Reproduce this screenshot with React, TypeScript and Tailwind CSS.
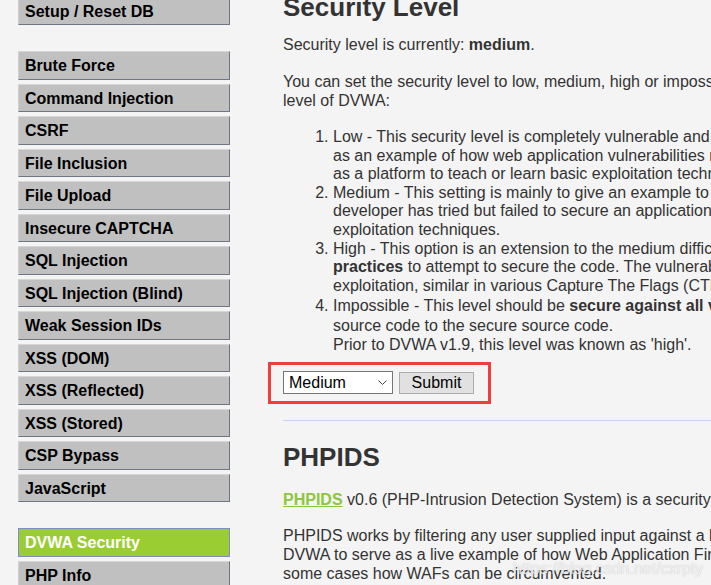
const menuGroups: string[][] = [
  ["Setup / Reset DB"],
  [
    "Brute Force",
    "Command Injection",
    "CSRF",
    "File Inclusion",
    "File Upload",
    "Insecure CAPTCHA",
    "SQL Injection",
    "SQL Injection (Blind)",
    "Weak Session IDs",
    "XSS (DOM)",
    "XSS (Reflected)",
    "XSS (Stored)",
    "CSP Bypass",
    "JavaScript",
  ],
  ["DVWA Security", "PHP Info", "About"],
]

const ACTIVE = "DVWA Security"

function MenuItem({ label }: { label: string }) {
  const active = label === ACTIVE
  return (
    <li
      className={
        active
          ? "flex h-[28.5px] shrink-0 items-center border border-[#7f8cc4] bg-[#9acd32] pl-[6px] pt-[2px] text-[16px] font-bold text-white"
          : "flex h-[28.5px] shrink-0 items-center border border-t-[#d6d6d6] border-l-[#d0d0d0] border-r-[#6e7685] border-b-[#6e7685] bg-[#c0c0c0] pl-[6px] pt-[2px] text-[16px] font-bold text-black"
      }
    >
      {label}
    </li>
  )
}

function Sidebar() {
  return (
    <nav className="-mt-[3.5px] ml-[18px] flex w-[212px] shrink-0 flex-col gap-[26px]">
      {menuGroups.map((group, i) => (
        <ul key={i} className="flex flex-col gap-[4px]">
          {group.map((label) => (
            <MenuItem key={label} label={label} />
          ))}
        </ul>
      ))}
    </nav>
  )
}

function SecurityForm() {
  return (
    <div className="-ml-[15px] mt-[7px] flex h-[42px] w-[223px] items-center border-[3px] border-[#f43b3b] pl-[12px]">
      <div className="relative h-[23px] w-[110px]">
        <select
          defaultValue="medium"
          className="h-full w-full appearance-none border border-[#767676] bg-white pl-[5px] text-[16px] leading-[21px] text-black outline-none"
        >
          <option value="low">Low</option>
          <option value="medium">Medium</option>
          <option value="high">High</option>
          <option value="impossible">Impossible</option>
        </select>
        <svg
          className="pointer-events-none absolute right-[6px] top-[9px] h-[5px] w-[9px] text-[#444]"
          viewBox="0 0 9 5"
          fill="none"
          stroke="currentColor"
          strokeWidth={1}
        >
          <polyline points="0.5 0.5 4.5 4.5 8.5 0.5" />
        </svg>
      </div>
      <button className="ml-[6px] h-[22px] w-[75px] border border-[#adadad] bg-[#e1e1e1] text-[16px] leading-[20px] text-black">
        Submit
      </button>
    </div>
  )
}

export default function App() {
  return (
    <div
      className="relative h-[585px] w-[711px] overflow-hidden bg-[#f4f4f4]"
      style={{ fontFamily: '"Liberation Sans", Arial, sans-serif' }}
    >
      <div className="flex">
        <Sidebar />

        <main className="ml-[53px] w-[820px] shrink-0 whitespace-nowrap text-[16px] text-[#333]">
          <h1 className="-mt-[8.5px] h-[30px] text-[26px] font-bold leading-[30px]">
            Security Level
          </h1>

          <p className="mt-[14px] leading-[18.6px]">
            Security level is currently: <b>medium</b>.
          </p>

          <p className="mt-[19.4px] leading-[18.6px]">
            You can set the security level to low, medium, high or impossible. The security level changes the vulnerability
            <br />
            level of DVWA:
          </p>

          <ol className="mt-[17.3px] list-decimal pl-[50px] leading-[18.6px]">
            <li>
              Low - This security level is completely vulnerable and <b>has no security measures at all</b>. It's use is to be
              <br />
              as an example of how web application vulnerabilities manifest through bad coding practices and to serve
              <br />
              as a platform to teach or learn basic exploitation techniques.
            </li>
            <li>
              Medium - This setting is mainly to give an example to the user of <b>bad security practices</b>, where the
              <br />
              developer has tried but failed to secure an application. It also acts as a challenge to users to refine their
              <br />
              exploitation techniques.
            </li>
            <li>
              High - This option is an extension to the medium difficulty, with a mixture of <b>harder or alternative bad</b>
              <br />
              <b>practices</b> to attempt to secure the code. The vulnerability may not allow the same extent of the
              <br />
              exploitation, similar in various Capture The Flags (CTF) competitions.
            </li>
            <li className="mt-[0.8px] leading-[19.5px]">
              Impossible - This level should be <b>secure against all vulnerabilities</b>. It is used to compare the vulnerable
              <br />
              source code to the secure source code.
              <br />
              Prior to DVWA v1.9, this level was known as 'high'.
            </li>
          </ol>

          <SecurityForm />

          <hr className="mt-[16.5px] border-0 border-t border-[#c4d5f3]" />

          <h1 className="mt-[21px] h-[30px] text-[26px] font-bold leading-[30px]">PHPIDS</h1>

          <p className="mt-[18px] leading-[19px]">
            <a href="#" className="font-bold text-[#8dc63f] underline">
              PHPIDS
            </a>{" "}
            v0.6 (PHP-Intrusion Detection System) is a security layer for PHP based web applications.
          </p>

          <p className="mt-[17px] leading-[19px]">
            PHPIDS works by filtering any user supplied input against a blacklist of potentially malicious code. It is used in
            <br />
            DVWA to serve as a live example of how Web Application Firewalls (WAFs) can help improve security and in
            <br />
            some cases how WAFs can be circumvented.
          </p>
        </main>
      </div>

      <span
        className="absolute left-[513px] top-[557px] whitespace-nowrap text-[16px] text-white/80"
        style={{ textShadow: "0 0 1px rgba(110,110,110,0.5)" }}
      >
        https://blog.csdn.net/cxrpty
      </span>
    </div>
  )
}
